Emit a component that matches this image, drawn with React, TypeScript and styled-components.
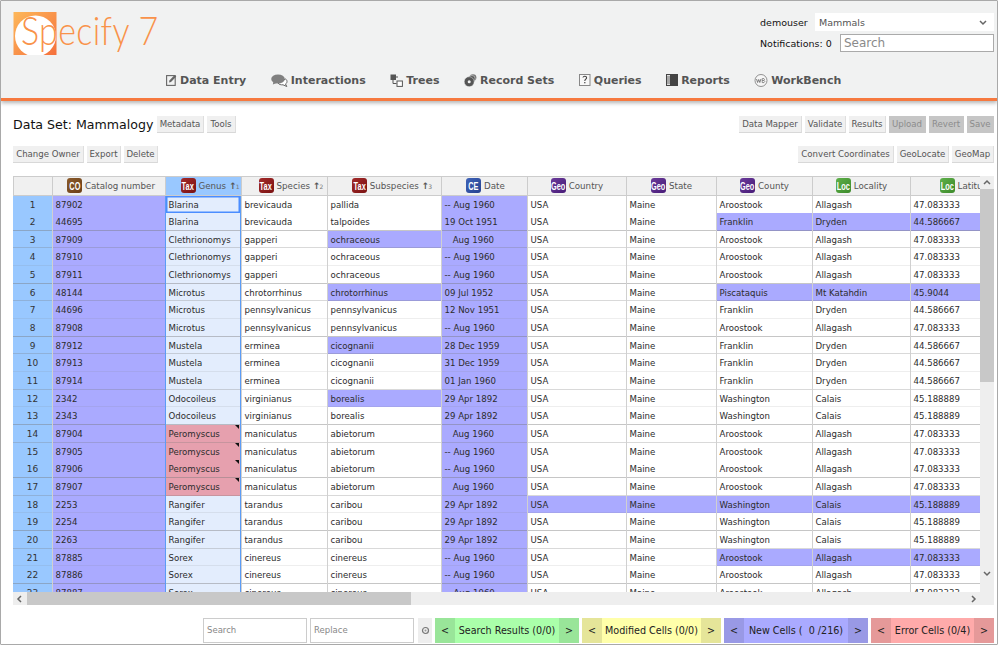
import React from "react";
import styled, { createGlobalStyle } from "styled-components";

const Global = createGlobalStyle`
  html, body { margin: 0; padding: 0; background: #fff; }
  body { font-family: "DejaVu Sans", Verdana, sans-serif; }
  * { box-sizing: border-box; }
`;

const Frame = styled.div`
  position: relative;
  width: 998px;
  height: 645px;
  border: 1px solid #a9a9a9;
  border-radius: 1px;
  overflow: hidden;
  background: #fff;
`;

const Header = styled.header`
  height: 100px;
  background: #f1f2f2;
  border-bottom: 3px solid #f6793f;
  box-shadow: 0 2px 4px rgba(0, 0, 0, 0.3);
  padding: 10px 3px 0 12px;
  position: relative;
`;

const TopRow = styled.div`
  display: flex;
  justify-content: space-between;
  height: 52px;
`;

const Logo = styled.div`
  position: relative;
  width: 150px;
  height: 44px;
`;

const LogoText = styled.span`
  position: absolute;
  left: 8px;
  top: -7px;
  font-family: Lato, sans-serif;
  font-weight: 300;
  font-size: 40px;
  line-height: 52px;
  letter-spacing: 0.4px;
  color: #f9924a;
  white-space: nowrap;
  transform: scaleX(0.85);
  transform-origin: left center;
`;

const UserPanel = styled.div`
  width: 234px;
  font-size: 9.5px;
  color: #111;
`;

const UserLine = styled.div`
  display: flex;
  align-items: center;
  justify-content: space-between;
  height: 18px;
  margin: 2px 0 3px;
`;

const NotifLine = styled(UserLine)`
  height: 18px;
  margin: 0;
`;

const Collection = styled.div`
  width: 179px;
  height: 18px;
  background: #fff;
  color: #555;
  font-size: 9.5px;
  display: flex;
  align-items: center;
  justify-content: space-between;
  padding: 0 6px 0 4px;
`;

const SearchBox = styled.div`
  width: 154px;
  height: 18px;
  background: #fff;
  border: 1px solid #aaa;
  color: #8a8a8a;
  font-size: 12px;
  line-height: 16px;
  padding-left: 3px;
`;

const Nav = styled.nav`
  display: flex;
  justify-content: flex-start;
  gap: 24.5px;
  padding-left: 153px;
  margin-top: 7px;
`;

const NavItem = styled.div`
  display: flex;
  align-items: center;
  gap: 3px;
  height: 20px;
  font-size: 11px;
  font-weight: bold;
  color: #555;
  white-space: nowrap;
`;

const Main = styled.main`
  padding: 15px 3px 0 12px;
`;

const Bar = styled.div<{ $mt?: number }>`
  display: flex;
  justify-content: space-between;
  align-items: center;
  height: 17px;
  margin-top: ${(p) => p.$mt ?? 0}px;
`;

const Group = styled.div`
  display: flex;
  align-items: center;
  gap: 3px;
`;

const Title = styled.h1`
  margin: 0;
  width: 141px;
  font-size: 12.6px;
  font-weight: normal;
  color: #111;
  white-space: nowrap;
`;

const Btn = styled.div<{ $w: number; $off?: boolean }>`
  width: ${(p) => p.$w}px;
  height: 17px;
  background: ${(p) => (p.$off ? "#c6c6c6" : "#f0f0f0")};
  border-bottom: 1px solid ${(p) => (p.$off ? "#c6c6c6" : "#d8d8d8")};
  border-right: 1px solid ${(p) => (p.$off ? "#c6c6c6" : "#dedede")};
  color: ${(p) => (p.$off ? "#8c8c8c" : "#555")};
  font-size: 8.6px;
  line-height: 17px;
  text-align: center;
  white-space: nowrap;
  overflow: hidden;
`;

const GridWrap = styled.section`
  margin-top: 13px;
  width: 981px;
`;

const GridTop = styled.div`
  display: flex;
  height: 416px;
`;

const Viewport = styled.div`
  width: 967px;
  height: 416px;
  overflow: hidden;
  border-top: 1px solid #ccc;
`;

const Row = styled.div`
  display: flex;
  width: 1100px;
  height: 17.67px;
`;

const HeadRow = styled.div`
  display: flex;
  width: 1100px;
  height: 18.5px;
  border-bottom: 1px solid #ccc;
`;

const Head = styled.div<{ $w: number; $on?: boolean; $pad?: number }>`
  flex: none;
  width: ${(p) => p.$w}px;
  display: flex;
  align-items: center;
  justify-content: center;
  gap: 3px;
  padding-left: ${(p) => p.$pad ?? 0}px;
  background: ${(p) => (p.$on ? "#99c8ff" : "#f0f0f0")};
  border-left: 1px solid #ccc;
  color: #555;
  font-size: 8.7px;
  white-space: nowrap;
`;

const Badge = styled.span<{ $a: string; $b: string }>`
  flex: none;
  width: 15px;
  height: 15px;
  border-radius: 3px;
  background: linear-gradient(135deg, ${(p) => p.$a}, ${(p) => p.$b});
  display: flex;
  align-items: center;
  justify-content: center;
`;

const BadgeText = styled.span`
  color: #fff;
  font-family: "Liberation Sans", Arial, sans-serif;
  font-size: 10.5px;
  font-weight: bold;
  white-space: nowrap;
  transform: scaleX(0.7);
`;

const Sort = styled.span`
  font-size: 9px;
  font-weight: bold;
  color: #555;
  letter-spacing: -1px;
  & small { font-size: 6px; font-weight: normal; color: #777; }
`;

const RowHead = styled.div<{ $w: number; $line: string }>`
  flex: none;
  width: ${(p) => p.$w}px;
  background: #99c8ff;
  color: #333;
  font-size: 9px;
  line-height: 18px;
  text-align: center;
  box-shadow: inset 0 -1px 0 ${(p) => p.$line};
`;

const Cell = styled.div<{ $w: number; $bg: string; $line: string; $genus?: boolean; $sel?: boolean }>`
  flex: none;
  position: relative;
  width: ${(p) => p.$w}px;
  background: ${(p) => p.$bg};
  border-left: 1px solid ${(p) => (p.$genus ? "#5b9cf6" : "#d0d0d0")};
  border-right: ${(p) => (p.$genus ? "1px solid #5b9cf6" : "none")};
  color: #2c2c2c;
  font-size: 8.6px;
  line-height: 18px;
  padding-left: 2.5px;
  white-space: nowrap;
  overflow: hidden;
  box-shadow: ${(p) => (p.$sel ? "inset 0 0 0 1.5px #4b8dff" : `inset 0 -1px 0 ${p.$line}`)};
`;

const Flag = styled.span`
  position: absolute;
  top: 0;
  right: 1px;
  width: 0;
  height: 0;
  border-top: 4px solid #111;
  border-left: 4px solid transparent;
`;

const VTrack = styled.div`
  width: 14px;
  height: 416px;
  background: #eeeeee;
  display: flex;
  flex-direction: column;
  align-items: center;
`;

const Arrow = styled.div`
  flex: none;
  width: 14px;
  height: 13px;
  display: flex;
  align-items: center;
  justify-content: center;
`;

const VThumb = styled.div`
  width: 14px;
  height: 193px;
  background: #c8c8c8;
`;

const Spacer = styled.div`
  flex: 1;
`;

const HTrack = styled.div`
  display: flex;
  align-items: center;
  height: 13px;
  background: #eeeeee;
`;

const HThumb = styled.div`
  width: 384px;
  height: 13px;
  background: #c8c8c8;
`;

const Footer = styled.footer`
  display: flex;
  justify-content: flex-end;
  gap: 3px;
  height: 25px;
  margin-top: 13px;
`;

const FindInput = styled.div`
  width: 104px;
  height: 25px;
  border: 1px solid #ccc;
  border-bottom-width: 1.5px;
  border-right-width: 1.5px;
  color: #888;
  font-size: 8.5px;
  line-height: 23px;
  padding-left: 3px;
  background: #fff;
`;

const Gear = styled.div`
  width: 14px;
  height: 25px;
  margin-left: 1px;
  background: #eeeeee;
  display: flex;
  align-items: center;
  justify-content: center;
`;

const Counter = styled.div<{ $w: number; $bg: string }>`
  width: ${(p) => p.$w}px;
  background: ${(p) => p.$bg};
  display: flex;
  align-items: center;
  justify-content: space-between;
  color: #222;
  font-size: 9.6px;
  white-space: nowrap;
`;

const Step = styled.span<{ $bg: string }>`
  flex: none;
  width: 20px;
  height: 25px;
  line-height: 25px;
  text-align: center;
  background: ${(p) => p.$bg};
`;

const P = "#aaaaff";
const W = "#ffffff";
const colW = [39, 113, 76, 86, 114, 86, 99, 90, 96, 98, 112];

const strong = "rgba(120,120,120,.42)";
const mid = "rgba(120,120,120,.28)";
const faint = "rgba(120,120,120,.13)";
const lines = ["transparent", strong, mid, faint, strong, mid, faint, strong, mid, faint, mid, faint, strong, mid, "transparent", strong, mid, faint, strong, mid, faint, strong, faint];

const badges = {
  CO: ["#8a5a2b", "#6b3f17"],
  Tax: ["#a32a2a", "#7a1212"],
  CE: ["#3f63b8", "#26418f"],
  Geo: ["#6a3a9a", "#481c78"],
  Loc: ["#5eb04a", "#3d8a2b"],
} as const;

type B = keyof typeof badges;
const heads: { b: B; t: string; s?: string; on?: boolean; pad?: number }[] = [
  { b: "CO", t: "Catalog number", pad: 4 },
  { b: "Tax", t: "Genus", s: "1", on: true, pad: 12 },
  { b: "Tax", t: "Species", s: "2", pad: 12 },
  { b: "Tax", t: "Subspecies", s: "3", pad: 14 },
  { b: "CE", t: "Date", pad: 2 },
  { b: "Geo", t: "Country" },
  { b: "Geo", t: "State" },
  { b: "Geo", t: "County" },
  { b: "Loc", t: "Locality" },
  { b: "Loc", t: "Latitude" },
];

const AUG = "-- Aug 1960";
const NOD = "\u00a0\u00a0\u00a0Aug 1960";
const A = ["Aroostook", "Allagash", "47.083333"];
const F = ["Franklin", "Dryden", "44.586667"];
const Wa = ["Washington", "Calais", "45.188889"];

type D = { v: string[]; p?: number[]; err?: boolean };
const rows: D[] = [
  { v: ["87902", "Blarina", "brevicauda", "pallida", AUG, ...A] },
  { v: ["44695", "Blarina", "brevicauda", "talpoides", "19 Oct 1951", ...F], p: [7, 8, 9] },
  { v: ["87909", "Clethrionomys", "gapperi", "ochraceous", NOD, ...A], p: [3] },
  { v: ["87910", "Clethrionomys", "gapperi", "ochraceous", AUG, ...A] },
  { v: ["87911", "Clethrionomys", "gapperi", "ochraceous", AUG, ...A] },
  { v: ["48144", "Microtus", "chrotorrhinus", "chrotorrhinus", "09 Jul 1952", "Piscataquis", "Mt Katahdin", "45.9044"], p: [3, 7, 8, 9] },
  { v: ["44696", "Microtus", "pennsylvanicus", "pennsylvanicus", "12 Nov 1951", ...F] },
  { v: ["87908", "Microtus", "pennsylvanicus", "pennsylvanicus", AUG, ...A] },
  { v: ["87912", "Mustela", "erminea", "cicognanii", "28 Dec 1959", ...F], p: [3] },
  { v: ["87913", "Mustela", "erminea", "cicognanii", "31 Dec 1959", ...F] },
  { v: ["87914", "Mustela", "erminea", "cicognanii", "01 Jan 1960", ...F] },
  { v: ["2342", "Odocoileus", "virginianus", "borealis", "29 Apr 1892", ...Wa], p: [3] },
  { v: ["2343", "Odocoileus", "virginianus", "borealis", "29 Apr 1892", ...Wa] },
  { v: ["87904", "Peromyscus", "maniculatus", "abietorum", NOD, ...A], err: true },
  { v: ["87905", "Peromyscus", "maniculatus", "abietorum", AUG, ...A], err: true },
  { v: ["87906", "Peromyscus", "maniculatus", "abietorum", AUG, ...A], err: true },
  { v: ["87907", "Peromyscus", "maniculatus", "abietorum", NOD, ...A], err: true },
  { v: ["2253", "Rangifer", "tarandus", "caribou", "29 Apr 1892", ...Wa], p: [5, 6, 7, 8, 9] },
  { v: ["2254", "Rangifer", "tarandus", "caribou", "29 Apr 1892", ...Wa] },
  { v: ["2263", "Rangifer", "tarandus", "caribou", "29 Apr 1892", ...Wa] },
  { v: ["87885", "Sorex", "cinereus", "cinereus", AUG, ...A], p: [7, 8, 9] },
  { v: ["87886", "Sorex", "cinereus", "cinereus", AUG, ...A] },
  { v: ["87887", "Sorex", "cinereus", "cinereus", AUG, ...A] },
];

const cellBg = (r: D, c: number) => {
  if (c === 0 || c === 4) return P;
  if (c === 1) return r.err ? "#e6a0ae" : "#e3edfd";
  return r.p?.includes(c) ? P : W;
};

const Chevron = ({ d }: { d: "u" | "d" | "l" | "r" }) => {
  const pts = { u: "2,6 5,3 8,6", d: "2,4 5,7 8,4", l: "6,2 3,5 6,8", r: "4,2 7,5 4,8" }[d];
  return (
    <svg width="10" height="10" viewBox="0 0 10 10">
      <polyline points={pts} fill="none" stroke="#666" strokeWidth="1.5" />
    </svg>
  );
};

const LogoMark = () => (
  <svg width="46" height="44" viewBox="0 0 46 44" style={{ display: "block" }}>
    <defs>
      <linearGradient id="lg" x1="0" y1="0" x2="1" y2="1">
        <stop offset="0" stopColor="#fdb85a" />
        <stop offset="1" stopColor="#f5703c" />
      </linearGradient>
    </defs>
    <rect x="0.5" y="1" width="43" height="43" fill="url(#lg)" />
    <circle cx="22.5" cy="25" r="20.5" fill="#fff" />
  </svg>
);

const IconEntry = () => (
  <svg width="11" height="12" viewBox="0 0 11 12">
    <rect x="0.6" y="1.6" width="8.6" height="9.8" fill="none" stroke="#666" strokeWidth="1.1" />
    <path d="M3 8.5 L3.4 6.6 L8.6 1 L10.3 2.4 L5 8 Z" fill="#666" />
  </svg>
);
const IconChat = () => (
  <svg width="17" height="13" viewBox="0 0 17 13">
    <path d="M14.5 5 C16.5 6 16.5 9 14.5 10 L15.8 12.5 L12 10.8 C10 11 8 10.5 7 9 Z" fill="#fff" stroke="#555" strokeWidth="0.9" />
    <ellipse cx="7" cy="5" rx="6.8" ry="4.6" fill="#808080" />
    <path d="M2.5 7.5 L1.8 10.5 L5.8 9 Z" fill="#808080" />
  </svg>
);
const IconTrees = () => (
  <svg width="13" height="13" viewBox="0 0 13 13">
    <rect x="0.5" y="0.5" width="5.5" height="5.5" fill="#555" />
    <path d="M3 6 V9.5 H6.5 M6 3 H8" stroke="#555" fill="none" />
    <rect x="7" y="7" width="5.4" height="5.4" fill="#fff" stroke="#555" strokeWidth="1" />
  </svg>
);
const IconDisks = () => (
  <svg width="13" height="13" viewBox="0 0 13 13">
    <circle cx="9" cy="3.6" r="3.4" fill="#777" />
    <circle cx="7.6" cy="5" r="3.6" fill="#555" stroke="#f1f2f2" strokeWidth="0.5" />
    <circle cx="5.2" cy="7.7" r="5" fill="#555" stroke="#f1f2f2" strokeWidth="0.5" />
    <circle cx="5.2" cy="7.7" r="1.5" fill="#f1f2f2" />
  </svg>
);
const IconQuery = () => (
  <svg width="12" height="12" viewBox="0 0 12 12">
    <rect x="0.5" y="0.5" width="10.5" height="11" fill="#f8f8f8" stroke="#888" />
    <path d="M4 3.6 C4 1.8 7.6 1.8 7.6 3.8 C7.6 5.2 5.8 5.2 5.8 7" fill="none" stroke="#444" strokeWidth="1.1" />
    <rect x="5.2" y="8" width="1.2" height="1.3" fill="#444" />
  </svg>
);
const IconReport = () => (
  <svg width="12" height="12" viewBox="0 0 12 12">
    <rect x="0" y="0" width="12" height="12" fill="#444" />
    <rect x="1" y="1" width="3" height="10" fill="#ddd" />
    <path d="M1 3 H4 M1 5 H4 M1 7 H4 M1 9 H4" stroke="#444" strokeWidth="0.7" />
  </svg>
);
const IconBench = () => (
  <svg width="14" height="13" viewBox="0 0 14 13">
    <circle cx="7" cy="6.5" r="6" fill="#f6f6f6" stroke="#777" strokeWidth="0.8" />
    <path d="M2.5 5 L3.6 8.5 L4.7 5.5 L5.8 8.5 L6.9 5" fill="none" stroke="#666" strokeWidth="0.8" />
    <path d="M8.2 4.6 V8.6 M8.2 4.6 H10 Q11 5.5 10 6.5 H8.2 M10 6.5 Q11.6 7.5 10 8.6 H8.2" fill="none" stroke="#666" strokeWidth="0.7" />
  </svg>
);
const IconGear = () => (
  <svg width="9" height="9" viewBox="0 0 9 9">
    <circle cx="4.5" cy="4.5" r="3" fill="none" stroke="#777" strokeWidth="1.2" />
    <circle cx="4.5" cy="4.5" r="1" fill="#999" />
  </svg>
);

const navItems: [React.ReactNode, string][] = [
  [<IconEntry key="a" />, "Data Entry"],
  [<IconChat key="b" />, "Interactions"],
  [<IconTrees key="c" />, "Trees"],
  [<IconDisks key="d" />, "Record Sets"],
  [<IconQuery key="e" />, "Queries"],
  [<IconReport key="f" />, "Reports"],
  [<IconBench key="g" />, "WorkBench"],
];

const counters = [
  { w: 144, t: "Search Results (0/0)", bg: "#aaffaa", d: "#99e599" },
  { w: 139, t: "Modified Cells (0/0)", bg: "#ffffaa", d: "#e5e599" },
  { w: 144, t: "New Cells (\u00a0\u00a00\u00a0/216)", bg: "#aaaaff", d: "#9999e5" },
  { w: 123, t: "Error Cells (0/4)", bg: "#ffaaaa", d: "#e59999" },
];

export default function App() {
  return (
    <Frame>
      <Global />
      <Header>
        <TopRow>
          <Logo>
            <LogoMark />
            <LogoText>Specify 7</LogoText>
          </Logo>
          <UserPanel>
            <UserLine>
              <span>demouser</span>
              <Collection>
                <span>Mammals</span>
                <Chevron d="d" />
              </Collection>
            </UserLine>
            <NotifLine>
              <span>Notifications: 0</span>
              <SearchBox>Search</SearchBox>
            </NotifLine>
          </UserPanel>
        </TopRow>
        <Nav>
          {navItems.map(([icon, label]) => (
            <NavItem key={label}>
              {icon}
              {label}
            </NavItem>
          ))}
        </Nav>
      </Header>
      <Main>
        <Bar>
          <Group>
            <Title>Data Set: Mammalogy</Title>
            <Btn $w={47}>Metadata</Btn>
            <Btn $w={29}>Tools</Btn>
          </Group>
          <Group>
            <Btn $w={63}>Data Mapper</Btn>
            <Btn $w={41}>Validate</Btn>
            <Btn $w={37}>Results</Btn>
            <Btn $w={37} $off>Upload</Btn>
            <Btn $w={35} $off>Revert</Btn>
            <Btn $w={27} $off>Save</Btn>
          </Group>
        </Bar>
        <Bar $mt={13}>
          <Group>
            <Btn $w={71}>Change Owner</Btn>
            <Btn $w={34}>Export</Btn>
            <Btn $w={34}>Delete</Btn>
          </Group>
          <Group>
            <Btn $w={96}>Convert Coordinates</Btn>
            <Btn $w={52}>GeoLocate</Btn>
            <Btn $w={42}>GeoMap</Btn>
          </Group>
        </Bar>
        <GridWrap>
          <GridTop>
            <Viewport>
              <HeadRow>
                <Head $w={colW[0]} />
                {heads.map((h, i) => (
                  <Head key={h.t} $w={colW[i + 1]} $on={h.on} $pad={h.pad}>
                    <Badge $a={badges[h.b][0]} $b={badges[h.b][1]}>
                      <BadgeText>{h.b}</BadgeText>
                    </Badge>
                    <span>{h.t}</span>
                    {h.s && (
                      <Sort>
                        ↑<small>{h.s}</small>
                      </Sort>
                    )}
                  </Head>
                ))}
              </HeadRow>
              {rows.map((r, ri) => (
                <Row key={ri}>
                  <RowHead $w={colW[0]} $line={lines[ri]}>{ri + 1}</RowHead>
                  {[r.v[0], r.v[1], r.v[2], r.v[3], r.v[4], "USA", "Maine", r.v[5], r.v[6], r.v[7]].map((v, i) => (
                    <Cell
                      key={i}
                      $w={colW[i + 1]}
                      $bg={cellBg(r, i)}
                      $line={lines[ri]}
                      $genus={i === 1}
                      $sel={i === 1 && ri === 0}
                    >
                      {v}
                      {i === 1 && r.err && <Flag />}
                    </Cell>
                  ))}
                </Row>
              ))}
            </Viewport>
            <VTrack>
              <Arrow><Chevron d="u" /></Arrow>
              <VThumb />
              <Spacer />
              <Arrow><Chevron d="d" /></Arrow>
              <Arrow />
            </VTrack>
          </GridTop>
          <HTrack>
            <Arrow><Chevron d="l" /></Arrow>
            <HThumb />
            <Spacer />
            <Arrow><Chevron d="r" /></Arrow>
            <Arrow />
          </HTrack>
        </GridWrap>
        <Footer>
          <FindInput>Search</FindInput>
          <FindInput>Replace</FindInput>
          <Gear><IconGear /></Gear>
          {counters.map((c) => (
            <Counter key={c.t} $w={c.w} $bg={c.bg}>
              <Step $bg={c.d}>&lt;</Step>
              <span>{c.t}</span>
              <Step $bg={c.d}>&gt;</Step>
            </Counter>
          ))}
        </Footer>
      </Main>
    </Frame>
  );
}
